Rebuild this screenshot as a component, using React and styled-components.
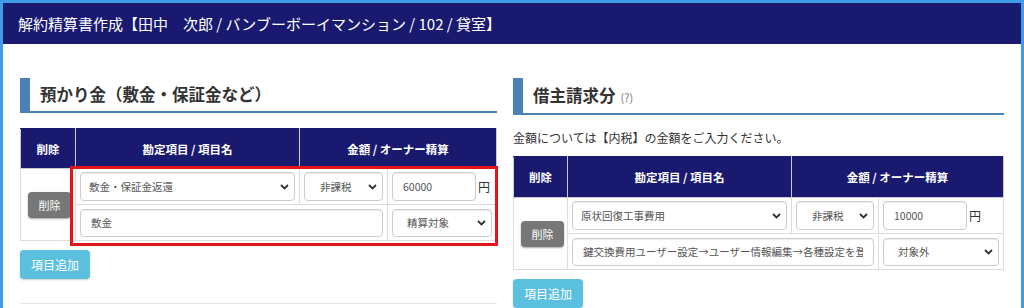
import React from 'react';
import styled, { createGlobalStyle } from 'styled-components';

const GlobalStyle = createGlobalStyle`
  html, body {
    margin: 0;
    padding: 0;
    background: #fff;
  }
  body {
    font-family: "Noto Sans CJK JP", "Noto Sans", sans-serif;
    color: #333;
  }
  * {
    box-sizing: border-box;
  }
`;

const Frame = styled.div`
  width: 1024px;
  min-height: 308px;
  border: 3px solid #3f9de8;
  border-bottom: none;
`;

const TitleBar = styled.header`
  height: 41px;
  background: #191970;
  color: #fff;
  font-size: 15px;
  display: flex;
  align-items: center;
  padding-left: 15px;
`;

const Columns = styled.div`
  display: grid;
  grid-template-columns: 477px 491px;
  column-gap: 16px;
  padding: 34px 17px 0;
`;

const Column = styled.section`
  min-width: 0;
`;

const SectionTitle = styled.h2`
  margin: 0;
  height: ${p => p.$h}px;
  line-height: ${p => p.$h - 2}px;
  border-left: 10px solid #4b81b4;
  border-bottom: 2px solid #4b81b4;
  padding-left: 10px;
  font-size: 16.5px;
  font-weight: 700;
  color: #333;
`;

const Hint = styled.span`
  font-size: 11px;
  font-weight: 400;
  color: #777;
  margin-left: 5px;
`;

const Note = styled.p`
  margin: 14px 0 9px;
  font-size: 12px;
  line-height: 18px;
  color: #333;
`;

const TableWrap = styled.div`
  position: relative;
  margin-top: ${p => p.$top || 0}px;
`;

const Grid = styled.table`
  width: ${p => p.$w}px;
  border-collapse: collapse;
  table-layout: fixed;
`;

const Th = styled.th`
  background: #191970;
  color: #fff;
  font-size: 11.5px;
  font-weight: 700;
  height: ${p => p.$h}px;
  padding: 0;
  border: 1px solid #c9c9d6;
  border-top-color: #191970;
`;

const Td = styled.td`
  border: 1px solid #ddd;
  padding: 3px ${p => p.$pr ?? 4}px 3px 4px;
  height: ${p => p.$h || 36}px;
  vertical-align: middle;
`;

const DeleteButton = styled.button`
  display: block;
  width: 43px;
  height: 26px;
  margin: 0 0 0 3px;
  padding: 0;
  border: none;
  border-radius: 4px;
  background: #777;
  color: #fff;
  font-family: inherit;
  font-size: 11px;
  box-shadow: 0 1px 2px rgba(0, 0, 0, 0.35);
`;

const Field = styled.input`
  display: block;
  height: ${p => p.$h || 29}px;
  width: ${p => (p.$w ? `${p.$w}px` : '100%')};
  border: 1px solid #ccc;
  border-radius: 4px;
  padding: 0 10px;
  font-family: inherit;
  font-size: 10.5px;
  color: #555;
  background: #fff;
  box-shadow: inset 0 1px 1px rgba(0, 0, 0, 0.075);
`;

const SelectBox = styled.div`
  position: relative;
  width: ${p => (p.$w ? `${p.$w}px` : '100%')};
`;

const NativeSelect = styled.select`
  display: block;
  width: 100%;
  height: ${p => p.$h || 29}px;
  appearance: none;
  border: 1px solid #ccc;
  border-radius: 4px;
  padding: 0 20px 0 ${p => p.$pl || 8}px;
  font-family: inherit;
  font-size: 10.5px;
  color: #555;
  background: #fff;
  box-shadow: inset 0 1px 1px rgba(0, 0, 0, 0.075);
`;

const Chevron = styled.svg`
  position: absolute;
  right: 6px;
  top: 50%;
  width: 9px;
  height: 6px;
  margin-top: -3px;
  pointer-events: none;
`;

const AmountRow = styled.div`
  display: flex;
  align-items: center;
  gap: 2px;
`;

const Yen = styled.span`
  font-size: 12px;
  color: #333;
`;

const AddButton = styled.button`
  display: block;
  width: 70px;
  height: 29px;
  margin-top: 9px;
  padding: 0;
  border: none;
  border-radius: 4px;
  background: #5bc0de;
  color: #fff;
  font-family: inherit;
  font-size: 12px;
  box-shadow: 0 1px 2px rgba(0, 0, 0, 0.2);
`;

const Rule = styled.hr`
  margin: 24px 0 0;
  border: none;
  border-top: 1px solid #e6e6e6;
`;

const Highlight = styled.div`
  position: absolute;
  left: 50px;
  top: 38px;
  width: 428px;
  height: 80px;
  border: 3px solid #e3141b;
  pointer-events: none;
`;

const Select = ({ value, w, h, pl }) => (
  <SelectBox $w={w}>
    <NativeSelect $h={h} $pl={pl} defaultValue={value}>
      <option>{value}</option>
    </NativeSelect>
    <Chevron viewBox="0 0 9 6">
      <path d="M1 1l3.5 3.5L8 1" fill="none" stroke="#333" strokeWidth="1.8" />
    </Chevron>
  </SelectBox>
);

const ChargeTable = ({ cols, headH, rowH, item, tax, amount, memo, target }) => (
  <Grid $w={cols.reduce((a, b) => a + b, 0)}>
    <colgroup>
      {cols.map((c, i) => <col key={i} style={{ width: c }} />)}
    </colgroup>
    <thead>
      <tr>
        <Th $h={headH}>削除</Th>
        <Th $h={headH}>勘定項目 / 項目名</Th>
        <Th $h={headH} colSpan={2}>金額 / オーナー精算</Th>
      </tr>
    </thead>
    <tbody>
      <tr>
        <Td rowSpan={2} $h={rowH[0]}>
          <DeleteButton>削除</DeleteButton>
        </Td>
        <Td $h={rowH[0]}>
          <Select value={item} />
        </Td>
        <Td $h={rowH[0]}>
          <Select value={tax} pl={15} />
        </Td>
        <Td $h={rowH[0]}>
          <AmountRow>
            <Field $w={84} defaultValue={amount} />
            <Yen>円</Yen>
          </AmountRow>
        </Td>
      </tr>
      <tr>
        <Td colSpan={2} $h={rowH[1]}>
          <Field $h={28} defaultValue={memo} />
        </Td>
        <Td $h={rowH[1]} $pr={4}>
          <Select value={target} h={28} pl={14} />
        </Td>
      </tr>
    </tbody>
  </Grid>
);

export default function App() {
  return (
    <>
      <GlobalStyle />
      <Frame>
        <TitleBar>解約精算書作成【田中　次郎 / バンブーボーイマンション / 102 / 貸室】</TitleBar>
        <Columns>
          <Column>
            <SectionTitle $h={35}>預かり金（敷金・保証金など）</SectionTitle>
            <TableWrap $top={15}>
              <ChargeTable
                cols={[55, 224, 88, 109]}
                headH={40}
                rowH={[36, 36]}
                item="敷金・保証金返還"
                tax="非課税"
                amount="60000"
                memo="敷金"
                target="精算対象"
              />
              <Highlight />
            </TableWrap>
            <AddButton>項目追加</AddButton>
            <Rule />
          </Column>
          <Column>
            <SectionTitle $h={37}>
              借主請求分<Hint>(?)</Hint>
            </SectionTitle>
            <Note>金額については【内税】の金額をご入力ください。</Note>
            <TableWrap>
              <ChargeTable
                cols={[54, 224, 87, 125]}
                headH={41}
                rowH={[35, 36]}
                item="原状回復工事費用"
                tax="非課税"
                amount="10000"
                memo="鍵交換費用ユーザー設定→ユーザー情報編集→各種設定を登録"
                target="対象外"
              />
            </TableWrap>
            <AddButton>項目追加</AddButton>
          </Column>
        </Columns>
      </Frame>
    </>
  );
}
